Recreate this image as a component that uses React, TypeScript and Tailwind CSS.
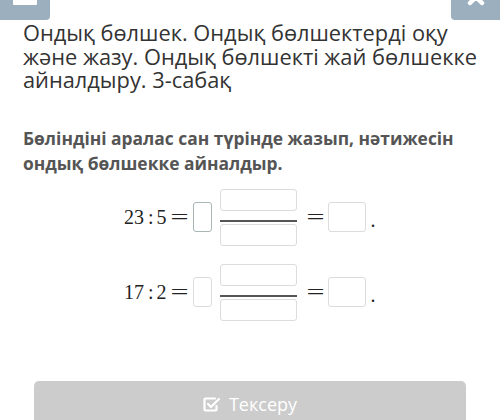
import React from "react";

const Box = ({ className = "" }: { className?: string }) => (
  <div className={`rounded-[3px] border bg-white ${className}`} />
);

const Fraction = () => (
  <div className="flex flex-col items-stretch w-[77px]">
    <Box className="h-[22px] border-[#dcdcdc]" />
    <div className="mt-[9px] h-[2px] bg-[#555]" />
    <Box className="mt-[2px] h-[22px] border-[#dcdcdc]" />
  </div>
);

const Eq = ({ className = "" }: { className?: string }) => (
  <span className={`inline-block w-[18px] text-center ${className}`}>
    <span className="inline-block scale-x-[1.6]">=</span>
  </span>
);

const Row = ({ a, b, focused }: { a: string; b: string; focused?: boolean }) => (
  <div className="flex items-center pl-[124px] h-[57px] text-[20px] text-[#222] font-['Liberation_Serif',serif]">
    <span className="flex items-center whitespace-nowrap">
      <span>{a}</span>
      <span className="ml-[4px] mr-[3px]">:</span>
      <span>{b}</span>
      <Eq className="ml-[4px]" />
    </span>
    <Box className={`ml-[4px] w-[19px] h-[30px] ${focused ? "border-[#a9b6b6]" : "border-[#dcdcdc]"}`} />
    <div className="ml-[8px]">
      <Fraction />
    </div>
    <Eq className="ml-[10px]" />
    <Box className="ml-[3px] w-[38px] h-[30px] border-[#dcdcdc]" />
    <span className="ml-[5px] mt-[6px]">.</span>
  </div>
);

const CheckIcon = () => (
  <svg width="18" height="15" viewBox="0 0 18 15" fill="none" stroke="white" strokeWidth="2.2" strokeLinecap="round" strokeLinejoin="round">
    <path d="M12 1.5H2.5a1 1 0 0 0-1 1v10a1 1 0 0 0 1 1h10a1 1 0 0 0 1-1V9" />
    <path d="M5 7l3 3 8-8" />
  </svg>
);

export default function App() {
  return (
    <div className="relative h-[420px] w-[500px] overflow-hidden bg-white font-['Open_Sans',sans-serif]">
      <div className="flex justify-between h-[20px]">
        <div className="w-[50px] h-[20px] bg-[#9cafbf] rounded-br-[4px] flex justify-center">
          <div className="w-[24px] h-[5px] bg-white rounded-b-[1px]" />
        </div>
        <div className="w-[49px] h-[20px] bg-[#9cafbf] rounded-bl-[4px] flex justify-center overflow-hidden">
          <svg width="20" height="20" viewBox="0 0 20 20" className="-mt-[13px]">
            <path d="M4 4L16 16M16 4L4 16" stroke="white" strokeWidth="4.5" strokeLinecap="round" />
          </svg>
        </div>
      </div>

      <h1 className="mt-[1px] pl-[23px] text-[21.8px] leading-[23.5px] text-[#333] font-normal">
        <span className="block whitespace-nowrap">Ондық бөлшек. Ондық бөлшектерді оқу</span>
        <span className="block whitespace-nowrap">және жазу. Ондық бөлшекті жай бөлшекке</span>
        <span className="block whitespace-nowrap">айналдыру. 3-сабақ</span>
      </h1>

      <p className="mt-[34px] pl-[23px] text-[17.4px] leading-[25px] font-bold text-[#555]">
        <span className="block whitespace-nowrap">Бөліндіні аралас сан түрінде жазып, нәтижесін</span>
        <span className="block whitespace-nowrap">ондық бөлшекке айналдыр.</span>
      </p>

      <div className="mt-[13px] flex flex-col gap-[18px]">
        <Row a="23" b="5" focused />
        <Row a="17" b="2" />
      </div>

      <div className="mx-[34px] mt-[60px] h-[48px] rounded-t-[5px] bg-[#cccccc] flex items-center justify-center gap-[8px] text-white text-[18px]">
        <CheckIcon />
        <span>Тексеру</span>
      </div>
    </div>
  );
}
